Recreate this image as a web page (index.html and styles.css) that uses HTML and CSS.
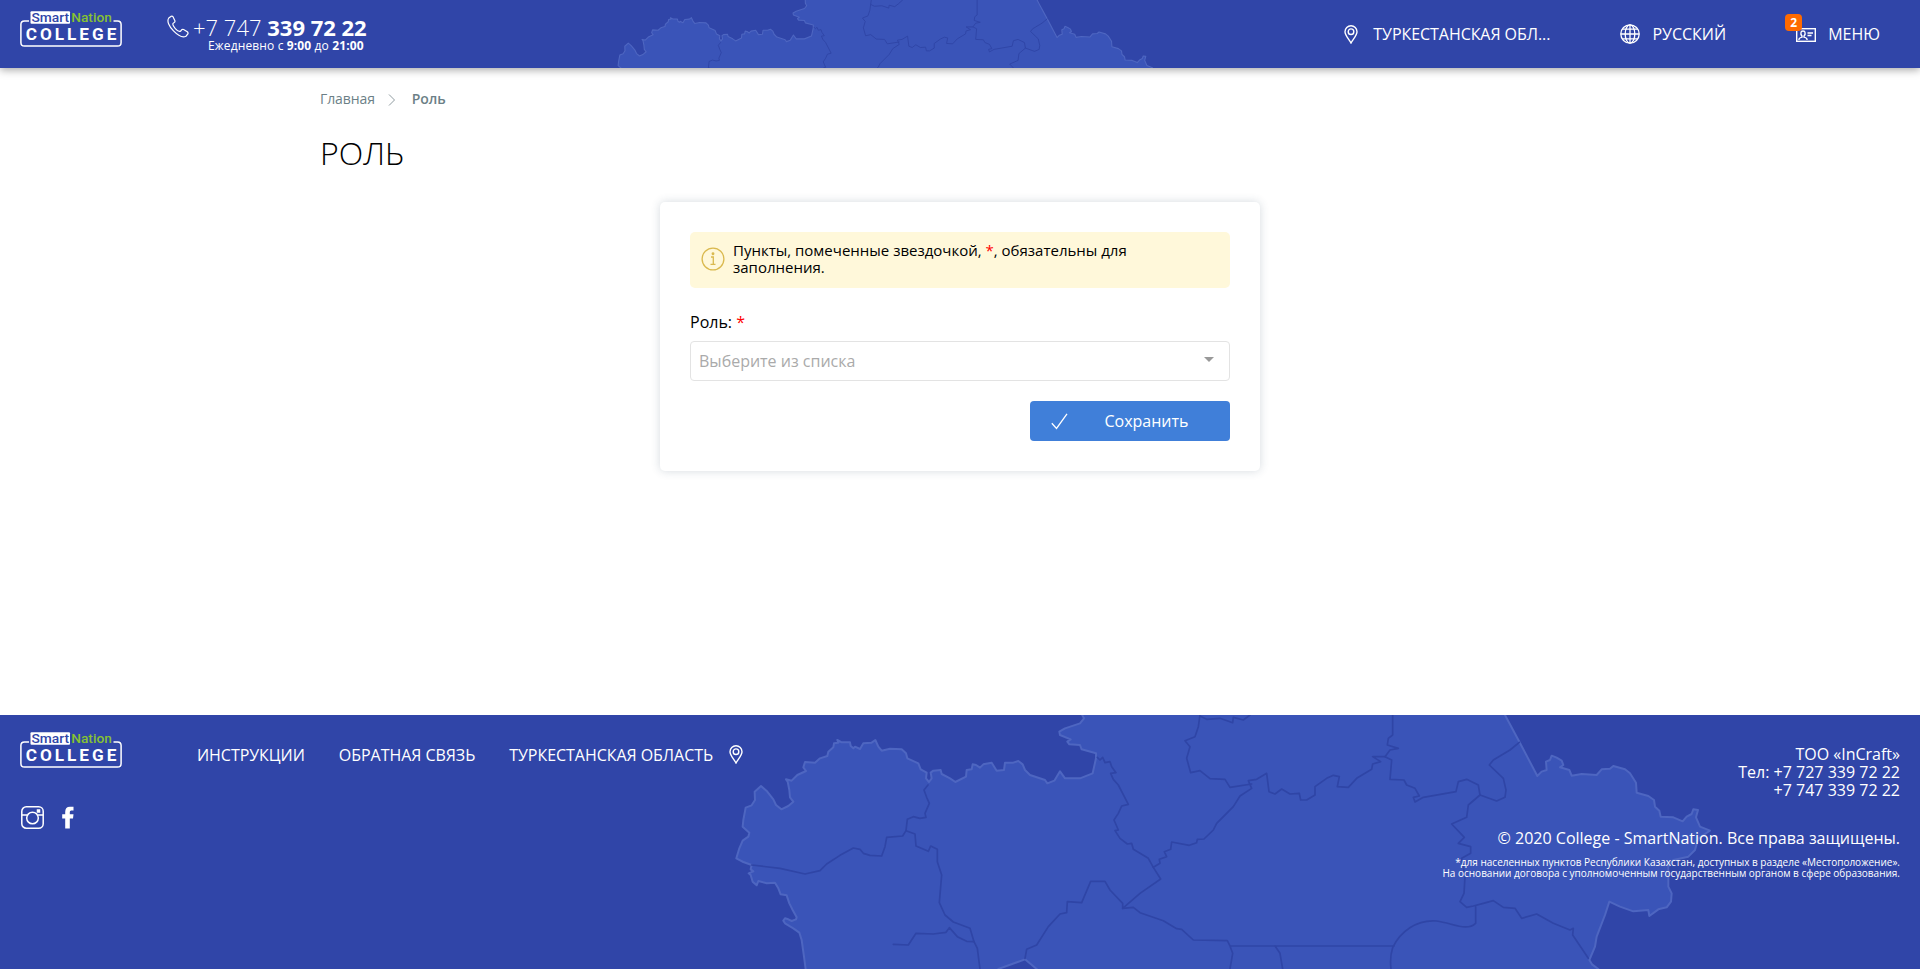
FILE: index.html
```
<!DOCTYPE html>
<html lang="ru">
<head>
<meta charset="utf-8">
<title>Роль</title>
<link rel="stylesheet" href="styles.css">
</head>
<body>
<svg class="defs" width="0" height="0" aria-hidden="true">
  <defs>
    <symbol id="logo" viewBox="0 0 102 36">
      <path d="M9 9.900H4.500Q.9 9.900 .9 13.500V31.500Q.9 35.100 4.500 35.100H97.500Q101.100 35.100 101.100 31.500V13.500Q101.100 9.900 97.500 9.900H93.500" fill="none" stroke="#fff" stroke-width="1.500"/>
      <rect x="10.500" y="0.200" width="39.500" height="12.600" rx="1" fill="#fff"/>
      <text x="11.500" y="10.600" class="logo-a" textLength="37.500" lengthAdjust="spacingAndGlyphs">Smart</text>
      <text x="51.300" y="10.600" class="logo-b" textLength="40.500" lengthAdjust="spacingAndGlyphs">Nation</text>
      <text x="5.800" y="29" class="logo-c" textLength="90.500" lengthAdjust="spacing">COLLEGE</text>
    </symbol>
    <symbol id="pin" viewBox="0 0 14 19">
      <path d="M7 18C5.500 14.600 1 10.600 1 6.700A6 6 0 0 1 13 6.700C13 10.600 8.500 14.600 7 18Z" fill="none" stroke="#fff" stroke-width="1.400"/>
      <circle cx="7" cy="6.700" r="2.800" fill="none" stroke="#fff" stroke-width="1.400"/>
    </symbol>
    <symbol id="map" viewBox="0 -7 1920 261" overflow="visible">
      <g transform="translate(720 -5) scale(.33333)" stroke-linejoin="round" stroke-linecap="round" stroke-width="5">
        <path fill="#3a54b8" stroke="#4e66c1" stroke-width="6" d="M262 820L257 777 252 740 245 690 238 668 220 655 195 640 190 632 195 625 205 628 215 633 228 628 230 622 218 600 208 580 200 556 182 553 175 535 165 518 140 520 115 513 110 526 98 515 92 495 86 490 100 484 92 478 95 465 70 456 49 445 58 415 68 392 85 380 88 368 68 350 70 330 77 293 95 286 105 270 104 245 123 228 140 243 160 268 168 285 184 298 205 288 220 275 210 262 208 240 203 215 198 208 215 212 232 195 258 183 250 172 255 156 285 158 300 145 322 138 325 125 340 112 342 100 355 98 352 90 365 97 390 97 392 108 400 115 405 110 420 117 430 100 455 98 466 90 475 110 485 122 510 116 545 118 558 130 562 145 595 160 602 178 620 188 618 205 627 216 635 205 632 188 640 182 662 180 665 192 690 205 706 216 738 200 740 180 755 178 758 163 768 165 780 173 790 163 815 158 830 182 852 180 855 158 880 158 895 153 908 163 915 180 930 195 975 210 982 220 1003 212 1020 184 1035 205 1080 205 1118 190 1128 145 1128 130 1085 118 1080 105 1048 103 1042 95 1052 88 1020 75 1018 65 1035 55 1080 40 1092 25 1085 12 1083 -40 2324 -43 2355 15 2398 95 2452 198 2465 185 2480 180 2478 155 2490 150 2495 137 2510 143 2525 152 2530 165 2520 172 2548 180 2555 197 2585 192 2630 195 2645 178 2670 176 2680 168 2715 178 2730 190 2748 218 2750 248 2785 258 2802 270 2805 290 2818 302 2822 320 2860 322 2888 334 2900 320 2915 312 2920 298 2934 300 2928 322 2940 350 2970 362 2950 375 2935 385 2925 420 2905 440 2860 450 2845 470 2845 530 2855 550 2853 575 2840 592 2815 598 2788 618 2785 600 2740 604 2700 590 2668 575 2655 615 2630 680 2625 710 2608 750 2616 763 2635 777V820H1000L950 777 915 748 835 777V820Z"/>
        <g fill="none" stroke="#2f45a6">
          <path d="M624 225L612 240 620 262 628 280 615 310 618 322 600 325 580 320 562 328 558 362 548 378 500 382 495 410 485 438 450 436 430 430 420 418 400 414 360 436 320 462 300 482 255 492 180 475 95 465"/>
          <path d="M558 362L585 372 588 408 625 424 632 408 652 418 652 455 665 495 658 578 675 615 700 636 750 655 762 695 772 715 780 777"/>
          <path d="M520 703L565 705 588 670 640 672 678 667 688 653 712 680 740 694 762 695"/>
          <path d="M1132 142L1140 150 1148 142 1155 158 1170 155 1175 170 1188 188 1172 190 1180 208 1195 225 1225 283 1205 288 1195 310 1182 330 1195 360 1185 362 1200 385 1222 402 1235 400 1240 418 1285 445 1300 472 1322 507 1260 550 1208 595 1208 580 1170 540 1155 514 1112 514 1085 578 1042 575 1040 608 1020 612 985 650 950 705 920 718 915 745"/>
          <path d="M1208 595L1240 592 1260 608 1330 632 1370 656 1385 658 1420 690 1522 692 1530 708H2022M1530 708L1538 730 1530 777M1665 708L1680 730 1688 777"/>
          <path d="M1300 472L1320 460 1318 448 1340 440 1333 425 1352 418 1355 396 1408 406 1430 398 1432 388 1452 387 1480 360 1490 340 1540 290 1560 258 1595 235 1585 212 1610 208 1640 190 1647 245 1665 252 1685 237 1710 252 1738 250 1742 270 1760 270 1785 255 1785 230 1820 205 1840 196 1858 200 1852 230 1885 232 1910 205 1955 178 1958 162 1982 155 1958 140 1995 140 2015 150 2010 208 2052 210 2060 225 2085 235 2098 258 2080 262 2085 276 2110 262 2208 245 2215 215 2240 208 2275 225 2280 255 2330 273 2355 262 2358 240 2350 205 2308 165 2320 150 2370 120 2398 97"/>
          <path d="M1995 140L2010 120 2035 115 2002 105 2005 85 2018 75V-40"/>
          <path d="M2280 255L2245 285 2240 322 2195 342 2233 382 2215 400 2252 410 2252 430 2225 445 2235 500 2232 550 2220 575 2240 592 2260 588 2290 580 2320 572 2350 592 2385 595 2405 625 2450 612 2500 640 2550 660 2560 655 2558 675 2605 745"/>
          <path d="M2267 590V640C2240 665 2200 640 2150 633 2090 628 2040 665 2018 713 2009 740 2011 760 2013 777"/>
          <path d="M1446 -30L1440 15 1435 50 1425 80 1395 92 1410 110 1400 145 1412 188 1440 182 1470 206 1515 208 1530 232 1595 222"/>
          <path d="M1440 18L1460 28 1500 25 1538 38 1540 22 1570 30 1590 15 1613 -6 1640 -30"/>
        </g>
      </g>
    </symbol>
  </defs>
</svg>

<header class="header">
  <svg class="header-map" viewBox="0 -7 1920 261" overflow="visible"><use href="#map" x="0" y="-7" width="1920" height="261"/></svg>
  <svg class="logo"><use href="#logo"/></svg>
  <div class="phone">
    <svg class="phone-icon" viewBox="0 0 22 23"><path d="M4.200 1.200L1.800 3C-.5 6 2.200 11.500 6.500 15.900 10.800 20.300 15.600 23 19 21.200L21 18.700Q21.200 17.500 20.300 16.800L16.600 14.500Q15.500 14 14.600 14.800L13.700 16C12.500 17 10 15.500 8.300 13.600 6.500 11.600 5.300 9.500 6.100 8.400L7.600 7.200Q8.200 6.400 7.800 5.400L5.900 1.600Q5.200.7 4.200 1.200Z" fill="none" stroke="#fff" stroke-width="1.200"/></svg>
    <div class="phone-text">
      <div class="phone-number">+7 747 <b>339 72 22</b></div>
      <div class="phone-hours">Ежедневно с <b>9:00</b> до <b>21:00</b></div>
    </div>
  </div>
  <nav class="top-nav">
    <a class="nav-region"><svg class="pin"><use href="#pin"/></svg><span>ТУРКЕСТАНСКАЯ ОБЛ...</span></a>
    <a class="nav-lang"><svg class="globe" viewBox="0 0 20 20" fill="none" stroke="#fff" stroke-width="1.300"><circle cx="10" cy="10" r="9.200"/><ellipse cx="10" cy="10" rx="4.800" ry="9.200"/><path d="M10 .8V19.200M.8 10H19.200M2.500 5.200H17.500M2.500 14.800H17.500"/></svg><span>РУССКИЙ</span></a>
    <a class="nav-menu"><span class="card-wrap"><svg class="card-icon" viewBox="0 0 20 14" fill="none" stroke="#fff" stroke-width="1.400"><rect x=".7" y=".7" width="18.600" height="12.600"/><path d="M3 12V11Q3.500 9.600 6 9.100V8Q4.500 6.500 4.900 4.700 5.200 3 7 3T9.100 4.700Q9.500 6.500 8 8V9.100Q10.500 9.600 11 11V12M11.500 5H17M11.500 7.500H15.500"/></svg><span class="badge">2</span></span><span>МЕНЮ</span></a>
  </nav>
</header>

<main class="main">
  <div class="crumbs"><span>Главная</span><svg class="chevron" viewBox="0 0 8 12"><path d="M1 .5L6.500 6 1 11.500" fill="none" stroke="#8e9a9f"/></svg><b>Роль</b></div>
  <h1 class="title">РОЛЬ</h1>
  <form class="card">
    <div class="alert">
      <svg class="info" viewBox="0 0 24 24" fill="none" stroke="#dab94e" stroke-width="1.300"><circle cx="12" cy="12" r="10.900"/><path d="M10 10H12.300V17M9.500 17.300H14.500"/><circle cx="12" cy="6.800" r=".8" fill="#dab94e"/></svg>
      <p>Пункты, помеченные звездочкой, <span class="req">*</span>, обязательны для<br>заполнения.</p>
    </div>
    <label class="label">Роль: <span class="req">*</span></label>
    <div class="select"><span>Выберите из списка</span><i class="arrow"></i></div>
    <button class="save" type="button"><svg class="check" viewBox="0 0 17 17"><path d="M.8 10.300L5.500 15.500 16 .8" fill="none" stroke="#fff" stroke-width="1.300"/></svg><span>Сохранить</span></button>
  </form>
</main>

<footer class="footer">
  <svg class="footer-map" viewBox="0 -7 1920 261" overflow="visible"><use href="#map" x="0" y="-7" width="1920" height="261"/></svg>
  <div class="foot-left">
    <svg class="logo"><use href="#logo"/></svg>
    <div class="social">
      <svg class="insta" viewBox="0 0 23 23" fill="none" stroke="#fff" stroke-width="1.500"><rect x=".8" y=".8" width="21.400" height="21.400" rx="4.500"/><circle cx="11.500" cy="12" r="5.800"/><path d="M1 9H6M17 9H22"/><rect x="16.500" y="4" width="2" height="2" fill="#fff"/></svg>
      <svg class="fb" viewBox="0 0 12 22"><path d="M3.200 22V12H.2V7.800H3.200V5.500Q3.200.2 8 .2H11.500V4H9.200Q7.800 4 7.800 5.500V7.800H11.500L11 12H7.800V22Z" fill="#fff"/></svg>
    </div>
  </div>
  <nav class="foot-nav">
    <a>ИНСТРУКЦИИ</a><a>ОБРАТНАЯ СВЯЗЬ</a><a class="foot-region">ТУРКЕСТАНСКАЯ ОБЛАСТЬ<svg class="pin"><use href="#pin"/></svg></a>
  </nav>
  <div class="foot-right">
    <p class="contacts">ТОО «InCraft»<br>Тел: +7 727 339 72 22<br>+7 747 339 72 22</p>
    <p class="copy">© 2020 College - SmartNation. Все права защищены.</p>
    <p class="note">*для населенных пунктов Республики Казахстан, доступных в разделе «Местоположение».<br>На основании договора с уполномоченным государственным органом в сфере образования.</p>
  </div>
</footer>
</body>
</html>
```
FILE: styles.css
```
* { box-sizing: border-box; }
html { height: 969px; overflow: hidden; }
body {
  margin: 0;
  height: 969px;
  display: flex;
  flex-direction: column;
  overflow: hidden;
  background: #fff;
  color: #000;
  font: 16px/18px "Open Sans", "Noto Sans", sans-serif;
}
p, h1 { margin: 0; }
.defs { position: absolute; }
.header {
  position: relative;
  height: 68px;
  flex: none;
  display: flex;
  background: #3045a8;
  color: #fff;
  padding: 0 40px 0 20px;
  clip-path: inset(0 0 -20px 0);
  box-shadow: 0 2px 8px rgba(0, 0, 0, .35);
}
.header-map {
  position: absolute;
  left: 208.300px;
  top: 0;
  width: 1060.400px;
  height: 144.200px;
  clip-path: inset(0 0 76.200px 0);
}
.logo { width: 102px; height: 36px; flex: none; display: block; position: relative; }
.header .logo { margin-top: 11px; }
.logo-a { font: 500 12px Roboto, sans-serif; fill: #3045a8; }
.logo-b { font: 500 12px Roboto, sans-serif; fill: #86c232; }
.logo-c { font: 700 17.200px Roboto, sans-serif; fill: #fff; }
.phone { position: relative; display: flex; margin-left: 45px; padding-top: 15px; }
.phone-icon { width: 22px; height: 23px; }
.phone-text { margin-left: 4px; }
.phone-number { font-size: 22px; line-height: 24px; font-weight: 300; white-space: nowrap; }
.phone-number b { font-weight: 700; }
.phone-hours { font-size: 12px; line-height: 14px; text-align: right; padding-right: 3px; letter-spacing: .13px; white-space: nowrap; }
.top-nav { position: relative; margin-left: auto; display: flex; align-items: center; }
.top-nav a { display: flex; align-items: center; white-space: nowrap; }
.pin { width: 14px; height: 19px; flex: none; }
.nav-region { gap: 15px; margin-right: 70px; letter-spacing: -.05px; }
.nav-lang { gap: 12px; margin-right: 70px; }
.globe { width: 20px; height: 20px; }
.nav-menu { gap: 12px; }
.card-wrap { position: relative; width: 20px; height: 14px; margin-top: 2px; }
.card-icon { width: 20px; height: 14px; display: block; }
.badge {
  position: absolute;
  left: -11px;
  top: -14px;
  width: 17px;
  height: 17px;
  border-radius: 4px;
  background: #ff6a00;
  font-weight: 700;
  font-size: 12px;
  line-height: 17px;
  text-align: center;
}
.main { width: 1280px; margin: 0 auto; flex: 1; padding-top: 21px; }
.crumbs { display: flex; align-items: center; font-size: 14px; line-height: 20px; color: #6c7f86; letter-spacing: -.1px; }
.crumbs b { font-weight: 600; }
.chevron { width: 8px; height: 12px; margin: 2px 16px 0 13px; }
.title { font-size: 32px; line-height: 40px; font-weight: 300; margin-top: 24px; }
.card {
  width: 600px;
  height: 269px;
  margin: 29px auto 0;
  padding: 30px;
  border-radius: 5px;
  box-shadow: 0 0 10px rgba(45, 70, 95, .2);
  display: flex;
  flex-direction: column;
}
.alert {
  height: 56px;
  flex: none;
  display: flex;
  align-items: center;
  gap: 8px;
  padding: 0 10px 2px 11px;
  border-radius: 5px;
  background: #fff8da;
  font-size: 15px;
  line-height: 17px;
}
.info { width: 24px; height: 24px; }
.req { color: #f00; }
.label { margin-top: 25px; line-height: 18px; }
.select {
  height: 40px;
  flex: none;
  margin-top: 10px;
  padding: 0 15px 0 8px;
  display: flex;
  align-items: center;
  justify-content: space-between;
  border: 1px solid #e3e3e3;
  border-radius: 4px;
  color: #aaa;
}
.arrow { border: 5px solid transparent; border-top: 5px solid #999; border-bottom: 0; margin-top: -4px; }
.save {
  width: 200px;
  height: 40px;
  margin: 20px 0 0 auto;
  padding: 0 0 0 21px;
  display: flex;
  align-items: center;
  border: 0;
  border-radius: 4px;
  background: #407fd9;
  color: #fff;
  font: inherit;
}
.save span { flex: 1; text-align: center; padding-right: 5px; }
.check { width: 17px; height: 17px; }
.footer {
  position: relative;
  height: 254px;
  flex: none;
  display: flex;
  overflow: hidden;
  background: #3045a8;
  color: #fff;
  padding: 17px 20px 0;
}
.footer-map { position: absolute; left: 0; top: -7px; width: 1920px; height: 261px; }
.foot-left { position: relative; width: 177px; }
.social { display: flex; margin: 38px 0 0 1px; }
.insta { width: 23px; height: 23px; }
.fb { width: 12px; height: 23px; margin-left: 18px; }
.foot-nav { position: relative; display: flex; gap: 34px; height: 19px; margin-top: 13px; align-items: center; white-space: nowrap; letter-spacing: -.04px; }
.foot-region { display: flex; align-items: center; gap: 16px; }
.foot-right { position: relative; margin-left: auto; padding-top: 13px; text-align: right; }
.copy { margin-top: 30px; }
.note { margin-top: 10px; font-size: 10px; line-height: 11px; }
```
